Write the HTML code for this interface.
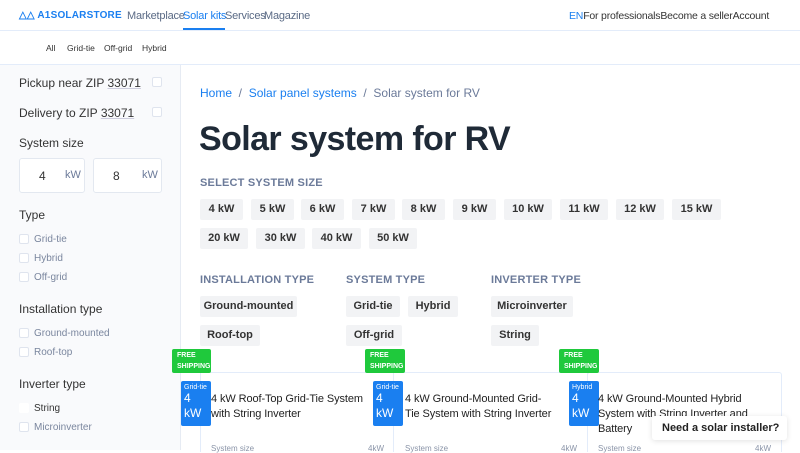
<!DOCTYPE html>
<html><head><meta charset="utf-8"><style>
*{box-sizing:border-box;margin:0;padding:0}
body{width:800px;height:450px;overflow:hidden;background:#fff;font-family:"Liberation Sans",sans-serif;position:relative;color:#222}
.a{position:absolute;white-space:nowrap}
.hdr{left:0;top:0;width:800px;height:31px;border-bottom:1px solid #e3ecfa}
.sub{left:0;top:31px;width:800px;height:34px;border-bottom:1px solid #e3ecfa}
.side{left:0;top:65px;width:181px;height:385px;background:#f9fafc;border-right:1px solid #e6ebf3}
.nav{font-size:11px;color:#5a6a85;top:10px;letter-spacing:-.2px}
.chip{position:absolute;height:21px;background:#f2f3f5;border-radius:2px;font-size:11px;font-weight:bold;color:#333;line-height:21px;text-align:center}
.h{font-size:11px;font-weight:bold;color:#6b7a99;letter-spacing:.2px}
.cb{position:absolute;width:10px;height:10px;border:1px solid #dfe4ee;background:#fff;border-radius:2px}
.sl{font-size:10px;color:#7a869e}
.st{font-size:12px;color:#333}
.inp{position:absolute;top:158px;height:35px;border:1px solid #e3e8f0;background:#fff;border-radius:3px}
.card{position:absolute;top:372px;height:80px;border:1px solid #e3ecfa;border-bottom:none}
.fs{position:absolute;top:349px;height:24px;background:#1fc93c;color:#fff;font-size:7px;font-weight:bold;line-height:11px;padding:1px 5px;border-radius:2px}
.bb{position:absolute;width:30px;background:#1a7ff0;color:#fff;border-radius:2px;padding:3px 3px}
.bb small{font-size:7px;display:block}
.bb b{font-size:12px;font-weight:normal;line-height:15px;display:block}
.ct{font-size:11px;color:#222;line-height:15px;position:absolute;white-space:normal;letter-spacing:-.1px}
.ss{font-size:8px;color:#8a94a8}
.sn{font-size:8.5px;color:#333;top:43px}
</style></head><body>
<div class="a hdr"></div>
<div class="a" style="left:19px;top:10px;font-size:10px;font-weight:bold;color:#1a7ff0;letter-spacing:.2px">&#9651;&#9651; A1SOLARSTORE</div>
<div class="a nav" style="left:127px">Marketplace</div>
<div class="a nav" style="left:183px;color:#1a7ff0">Solar kits</div>
<div class="a" style="left:183px;top:28px;width:42px;height:2px;background:#1a7ff0"></div>
<div class="a nav" style="left:225px">Services</div>
<div class="a nav" style="left:264px">Magazine</div>
<div class="a" style="left:569px;top:10px;font-size:10.5px;color:#333;letter-spacing:-.2px"><span style="color:#1a7ff0">EN</span>For professionalsBecome a sellerAccount</div>
<div class="a sub"></div>
<div class="a sn" style="left:46px">All</div>
<div class="a sn" style="left:67px">Grid-tie</div>
<div class="a sn" style="left:104px">Off-grid</div>
<div class="a sn" style="left:142px">Hybrid</div>
<div class="a side"></div>
<div class="a st" style="left:19px;top:76px">Pickup near ZIP <u style="text-decoration-color:#ccd">33071</u></div>
<div class="cb" style="left:152px;top:77px"></div>
<div class="a st" style="left:19px;top:106px">Delivery to ZIP <u style="text-decoration-color:#ccd">33071</u></div>
<div class="cb" style="left:152px;top:107px"></div>
<div class="a st" style="left:19px;top:136px">System size</div>
<div class="inp" style="left:19px;width:66px"></div><div class="a st" style="left:39px;top:169px">4</div><div class="a" style="left:65px;top:169px;font-size:11px;color:#6b7a99">kW</div>
<div class="inp" style="left:93px;width:69px"></div><div class="a st" style="left:113px;top:169px">8</div><div class="a" style="left:142px;top:169px;font-size:11px;color:#6b7a99">kW</div>
<div class="a st" style="left:19px;top:208px">Type</div>
<div class="cb" style="left:19px;top:234px"></div><div class="a sl" style="left:34px;top:234px">Grid-tie</div>
<div class="cb" style="left:19px;top:253px"></div><div class="a sl" style="left:34px;top:253px">Hybrid</div>
<div class="cb" style="left:19px;top:272px"></div><div class="a sl" style="left:34px;top:272px">Off-grid</div>
<div class="a st" style="left:19px;top:302px">Installation type</div>
<div class="cb" style="left:19px;top:328px"></div><div class="a sl" style="left:34px;top:328px">Ground-mounted</div>
<div class="cb" style="left:19px;top:347px"></div><div class="a sl" style="left:34px;top:347px">Roof-top</div>
<div class="a st" style="left:19px;top:377px">Inverter type</div>
<div class="cb" style="left:19px;top:403px;border-color:#fff"></div><div class="a sl" style="left:34px;top:403px;color:#333">String</div>
<div class="cb" style="left:19px;top:422px"></div><div class="a sl" style="left:34px;top:422px">Microinverter</div>

<div class="a" style="left:200px;top:86px;font-size:12px;color:#1a7ff0">Home <span style="color:#6b7a99">&nbsp;/&nbsp;</span> Solar panel systems <span style="color:#6b7a99">&nbsp;/&nbsp; Solar system for RV</span></div>
<div class="a" style="left:199px;top:120px;font-size:34px;font-weight:bold;color:#1f2a37;letter-spacing:-.6px">Solar system for RV</div>
<div class="a h" style="left:200px;top:177px">SELECT SYSTEM SIZE</div>
<div class="chip" style="left:200px;top:199px;width:43px">4 kW</div>
<div class="chip" style="left:251px;top:199px;width:43px">5 kW</div>
<div class="chip" style="left:301px;top:199px;width:43px">6 kW</div>
<div class="chip" style="left:352px;top:199px;width:43px">7 kW</div>
<div class="chip" style="left:402px;top:199px;width:43px">8 kW</div>
<div class="chip" style="left:453px;top:199px;width:43px">9 kW</div>
<div class="chip" style="left:504px;top:199px;width:48px">10 kW</div>
<div class="chip" style="left:560px;top:199px;width:48px">11 kW</div>
<div class="chip" style="left:616px;top:199px;width:48px">12 kW</div>
<div class="chip" style="left:672px;top:199px;width:49px">15 kW</div>
<div class="chip" style="left:200px;top:228px;width:48px">20 kW</div>
<div class="chip" style="left:256px;top:228px;width:49px">30 kW</div>
<div class="chip" style="left:312px;top:228px;width:49px">40 kW</div>
<div class="chip" style="left:369px;top:228px;width:48px">50 kW</div>
<div class="a h" style="left:200px;top:274px">INSTALLATION TYPE</div>
<div class="a h" style="left:346px;top:274px">SYSTEM TYPE</div>
<div class="a h" style="left:491px;top:274px">INVERTER TYPE</div>
<div class="chip" style="left:200px;top:296px;width:97px">Ground-mounted</div>
<div class="chip" style="left:200px;top:325px;width:60px">Roof-top</div>
<div class="chip" style="left:346px;top:296px;width:54px">Grid-tie</div>
<div class="chip" style="left:408px;top:296px;width:50px">Hybrid</div>
<div class="chip" style="left:346px;top:325px;width:56px">Off-grid</div>
<div class="chip" style="left:491px;top:296px;width:82px">Microinverter</div>
<div class="chip" style="left:491px;top:325px;width:48px">String</div>

<div class="card" style="left:200px;width:194px"></div>
<div class="card" style="left:393px;width:195px"></div>
<div class="card" style="left:587px;width:195px;border-radius:3px 3px 0 0"></div>
<div class="fs" style="left:172px;width:39px">FREE<br>SHIPPING</div>
<div class="fs" style="left:365px;width:40px">FREE<br>SHIPPING</div>
<div class="fs" style="left:559px;width:40px">FREE<br>SHIPPING</div>
<div class="bb" style="left:181px;top:381px;height:45px"><small>Grid-tie</small><b>4<br>kW</b></div>
<div class="bb" style="left:373px;top:381px;height:45px"><small>Grid-tie</small><b>4<br>kW</b></div>
<div class="bb" style="left:569px;top:381px;height:45px"><small>Hybrid</small><b>4<br>kW</b></div>
<div class="ct" style="left:211px;top:392px;width:165px">4 kW Roof-Top Grid-Tie System with String Inverter</div>
<div class="ct" style="left:405px;top:392px;width:150px">4 kW Ground-Mounted Grid-Tie System with String Inverter</div>
<div class="ct" style="left:598px;top:392px;width:150px">4 kW Ground-Mounted Hybrid System with String Inverter and Battery</div>
<div class="a ss" style="left:211px;top:444px">System size</div><div class="a ss" style="left:368px;top:444px">4kW</div>
<div class="a ss" style="left:405px;top:444px">System size</div><div class="a ss" style="left:561px;top:444px">4kW</div>
<div class="a ss" style="left:598px;top:444px">System size</div><div class="a ss" style="left:755px;top:444px">4kW</div>
<div class="a" style="left:652px;top:416px;width:135px;height:24px;background:#fff;border-radius:3px;box-shadow:0 1px 6px rgba(0,0,0,.12);font-size:11px;font-weight:bold;color:#222;padding:6px 0 0 10px">Need a solar installer?</div>
</body></html>
